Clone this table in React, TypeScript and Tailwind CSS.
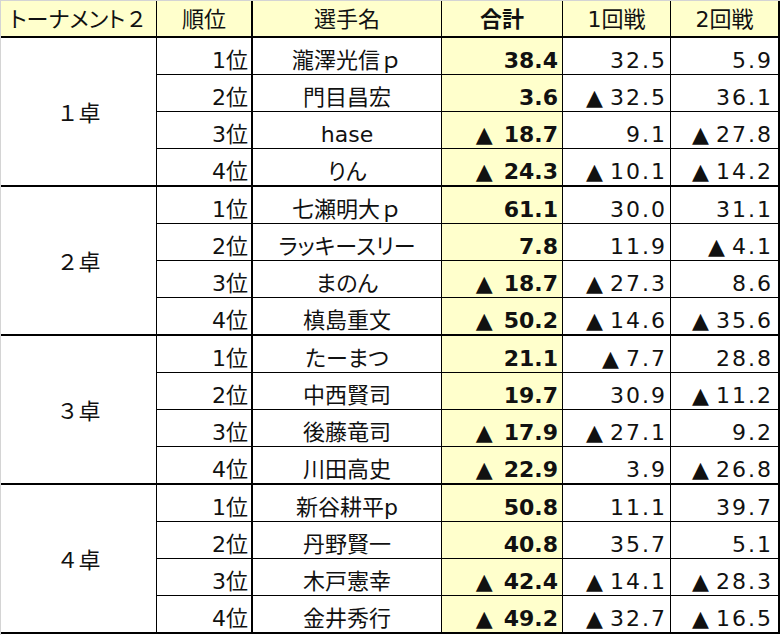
import React from "react";

type Row = { rank: string; name: string; total: string; r1: string; r2: string };
type Group = { table: string; rows: Row[] };

const groups: Group[] = [
  {
    table: "１卓",
    rows: [
      { rank: "1位", name: "瀧澤光信ｐ", total: "38.4", r1: "32.5", r2: "5.9" },
      { rank: "2位", name: "門目昌宏", total: "3.6", r1: "▲ 32.5", r2: "36.1" },
      { rank: "3位", name: "hase", total: "▲ 18.7", r1: "9.1", r2: "▲ 27.8" },
      { rank: "4位", name: "りん", total: "▲ 24.3", r1: "▲ 10.1", r2: "▲ 14.2" },
    ],
  },
  {
    table: "２卓",
    rows: [
      { rank: "1位", name: "七瀬明大ｐ", total: "61.1", r1: "30.0", r2: "31.1" },
      { rank: "2位", name: "ラッキースリー", total: "7.8", r1: "11.9", r2: "▲ 4.1" },
      { rank: "3位", name: "まのん", total: "▲ 18.7", r1: "▲ 27.3", r2: "8.6" },
      { rank: "4位", name: "槙島重文", total: "▲ 50.2", r1: "▲ 14.6", r2: "▲ 35.6" },
    ],
  },
  {
    table: "３卓",
    rows: [
      { rank: "1位", name: "たーまつ", total: "21.1", r1: "▲ 7.7", r2: "28.8" },
      { rank: "2位", name: "中西賢司", total: "19.7", r1: "30.9", r2: "▲ 11.2" },
      { rank: "3位", name: "後藤竜司", total: "▲ 17.9", r1: "▲ 27.1", r2: "9.2" },
      { rank: "4位", name: "川田高史", total: "▲ 22.9", r1: "3.9", r2: "▲ 26.8" },
    ],
  },
  {
    table: "４卓",
    rows: [
      { rank: "1位", name: "新谷耕平p", total: "50.8", r1: "11.1", r2: "39.7" },
      { rank: "2位", name: "丹野賢一", total: "40.8", r1: "35.7", r2: "5.1" },
      { rank: "3位", name: "木戸憲幸", total: "▲ 42.4", r1: "▲ 14.1", r2: "▲ 28.3" },
      { rank: "4位", name: "金井秀行", total: "▲ 49.2", r1: "▲ 32.7", r2: "▲ 16.5" },
    ],
  },
];

function Name({ name }: { name: string }) {
  const full = name.endsWith("ｐ");
  const base = full ? name.slice(0, -1) : name;
  return (
    <span>
      <span className="[font-feature-settings:'palt']">{base}</span>
      {full && <span>ｐ</span>}
    </span>
  );
}

function Num({ v, bold }: { v: string; bold?: boolean }) {
  if (v.startsWith("▲ ")) {
    return (
      <span className="inline-flex items-baseline">
        <span className={`inline-block text-left text-[22px] tracking-normal font-normal ${bold ? "w-[28px]" : "w-[24px]"}`}>▲</span>
        <span>{v.slice(2)}</span>
      </span>
    );
  }
  return <span>{v}</span>;
}

function DataRow({ row, last }: { row: Row; last: boolean }) {
  return (
    <div className={`flex ${last ? "h-[38px] border-b-2" : "h-[37px] border-b"} border-black`}>
      <div className="w-[96px] border-r-2 border-black flex items-center justify-end pr-[3px] pt-[9px]">
        {row.rank}
      </div>
      <div className="w-[189px] border-r border-black flex items-center justify-center pt-[9px]">
        <Name name={row.name} />
      </div>
      <div className="w-[121px] border-r border-black bg-[#ffffcc] flex items-center justify-end pr-[4px] pt-[9px] font-bold">
        <Num v={row.total} bold />
      </div>
      <div className="w-[108px] border-r border-black flex items-center justify-end pr-[3px] pt-[9px] tracking-[2px]">
        <Num v={row.r1} />
      </div>
      <div className="w-[109px] border-r-2 border-black flex items-center justify-end pr-[5px] pt-[9px] tracking-[2px]">
        <Num v={row.r2} />
      </div>
    </div>
  );
}

export default function App() {
  return (
    <div className="w-[780px] h-[635px] bg-white border-t border-l border-[#d4d4d4] text-[22px] leading-none text-[#111] font-['DejaVu_Sans','Noto_Sans_CJK_JP',sans-serif] overflow-hidden">
      <div className="flex h-[37px] border-b-2 border-black bg-[#ffffcc]">
        <div className="w-[156px] border-r border-black flex items-center justify-center pt-[2px]">
          <span className="[font-feature-settings:'palt']">トーナメント</span>
          <span>２</span>
        </div>
        <div className="w-[96px] border-r-2 border-black flex items-center justify-center pt-[2px]">順位</div>
        <div className="w-[189px] border-r border-black flex items-center justify-center pt-[2px]">選手名</div>
        <div className="w-[121px] border-r border-black flex items-center justify-center pt-[2px] font-bold">合計</div>
        <div className="w-[108px] border-r border-black flex items-center justify-center pt-[2px]">1回戦</div>
        <div className="w-[109px] border-r-2 border-black flex items-center justify-center pt-[2px]">2回戦</div>
      </div>
      {groups.map((g) => (
        <div key={g.table} className="flex">
          <div className="w-[156px] border-r border-b-2 border-black flex items-center justify-center pt-[4px]">
            {g.table}
          </div>
          <div className="flex flex-col">
            {g.rows.map((r, i) => (
              <DataRow key={i} row={r} last={i === g.rows.length - 1} />
            ))}
          </div>
        </div>
      ))}
    </div>
  );
}
